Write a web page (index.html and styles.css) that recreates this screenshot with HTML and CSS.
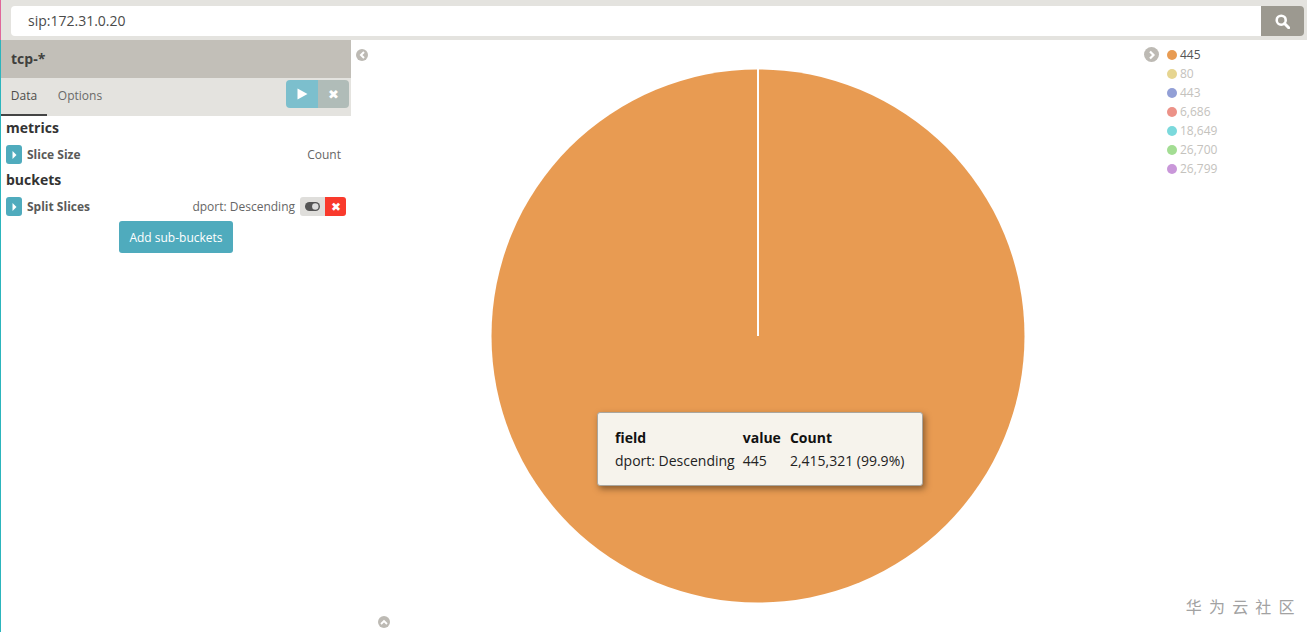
FILE: index.html
```html
<!DOCTYPE html>
<html lang="en">
<head>
<meta charset="utf-8">
<title>tcp-*</title>
<link rel="stylesheet" href="styles.css">
</head>
<body>
<div class="app">
  <header class="query-bar">
    <div class="query-input">sip:172.31.0.20</div>
    <button class="query-btn" aria-label="Search">
      <svg width="15" height="15" viewBox="0 0 14 14"><circle cx="5.800" cy="5.800" r="4.200" fill="none" stroke="#fff" stroke-width="2.400"/><path d="M8.900 8.900L12.800 12.800" stroke="#fff" stroke-width="2.800" stroke-linecap="round"/></svg>
    </button>
  </header>
  <main class="workspace">
    <aside class="sidebar">
      <div class="index-title">tcp-*</div>
      <div class="tabs">
        <span class="tab active">Data</span>
        <span class="tab">Options</span>
        <div class="run-group">
          <span class="run-btn">
            <svg width="11" height="12" viewBox="0 0 11 12"><path d="M0.500 0.500L10.500 6L0.500 11.500Z" fill="#fff"/></svg>
          </span>
          <span class="stop-btn">&#10006;</span>
        </div>
      </div>
      <div class="section-title first">metrics</div>
      <div class="agg-row">
        <span class="agg-toggle"><svg width="5" height="8" viewBox="0 0 5 8"><path d="M0.500 0L4.500 4L0.500 8Z" fill="#fff"/></svg></span>
        <span class="agg-name">Slice Size</span>
        <span class="agg-value pad-right">Count</span>
      </div>
      <div class="section-title">buckets</div>
      <div class="agg-row">
        <span class="agg-toggle"><svg width="5" height="8" viewBox="0 0 5 8"><path d="M0.500 0L4.500 4L0.500 8Z" fill="#fff"/></svg></span>
        <span class="agg-name">Split Slices</span>
        <span class="agg-value">dport: Descending</span>
        <span class="agg-actions">
          <span class="agg-switch"><svg width="15" height="9" viewBox="0 0 15 9"><rect x="0" y="0" width="15" height="9" rx="4.500" fill="#555"/><circle cx="10.300" cy="4.500" r="3.200" fill="#ddd"/></svg></span>
          <span class="agg-remove">&#10006;</span>
        </span>
      </div>
      <div class="add-row"><button class="add-btn">Add sub-buckets</button></div>
    </aside>
    <section class="viz">
      <span class="round-icon collapse-left"><svg width="7" height="8" viewBox="0 0 7 8"><path d="M5 1L2 4L5 7" fill="none" stroke="#fff" stroke-width="2"/></svg></span>
      <div class="chart">
        <svg class="pie" width="534" height="534" viewBox="0 0 534 534">
          <circle cx="267" cy="267" r="266.500" fill="#e89b52"/>
          <path d="M267 0V267" stroke="#fff" stroke-width="2"/>
        </svg>
        <div class="tooltip">
          <table>
            <tr><th>field</th><th>value</th><th>Count</th></tr>
            <tr><td>dport: Descending</td><td>445</td><td>2,415,321 (99.9%)</td></tr>
          </table>
        </div>
      </div>
      <div class="legend">
        <span class="round-icon legend-toggle"><svg width="8" height="10" viewBox="0 0 8 10"><path d="M2 1.500L5.500 5L2 8.500" fill="none" stroke="#fff" stroke-width="2.200"/></svg></span>
        <ul class="legend-list">
          <li class="on"><i class="dot c1"></i>445</li>
          <li><i class="dot c2"></i>80</li>
          <li><i class="dot c3"></i>443</li>
          <li><i class="dot c4"></i>6,686</li>
          <li><i class="dot c5"></i>18,649</li>
          <li><i class="dot c6"></i>26,700</li>
          <li><i class="dot c7"></i>26,799</li>
        </ul>
      </div>
      <span class="round-icon collapse-up"><svg width="8" height="6" viewBox="0 0 8 6"><path d="M1 5L4 2L7 5" fill="none" stroke="#fff" stroke-width="1.800"/></svg></span>
      <div class="watermark">华 为 云 社 区</div>
    </section>
  </main>
</div>
</body>
</html>
```

FILE: styles.css
```css
* { box-sizing: border-box; }
html, body { margin: 0; height: 100%; overflow: hidden; background: #fff; }
body { font-family: "Open Sans", "Noto Sans CJK SC", sans-serif; font-size: 12px; color: #444; }
.app { display: flex; flex-direction: column; height: 632px; }

.query-bar {
  height: 40px; flex: none; display: flex;
  padding: 6px 3px 4px 11px;
  background: #e4e3df;
  box-shadow: inset 1px 0 0 #e0679a;
}
.query-input {
  flex: 1; background: #fff; border-radius: 4px 0 0 4px;
  padding-left: 17px; font-size: 14px; line-height: 30px; color: #4a4a4a;
}
.query-btn {
  width: 43px; border: 0; padding: 0; background: #9c9990;
  border-radius: 0 4px 4px 0; display: flex; align-items: center; justify-content: center;
}

.workspace { flex: 1; display: flex; min-height: 0; }
.sidebar { width: 351px; flex: none; border-left: 1px solid #2cb5bd; }
.index-title {
  height: 38px; background: #c2bfb8; padding-left: 10px;
  font-size: 14px; font-weight: 700; line-height: 38px; color: #3f3f3d;
}
.tabs {
  height: 38px; display: flex; align-items: stretch; background: #e4e3df; padding-right: 2px;
}
.tab { width: 46px; text-align: center; line-height: 35px; color: #6a6a68; }
.tab.active { border-bottom: 2px solid #444; color: #4d4d4b; }
.tab:nth-child(2) { width: 66px; }
.run-group { margin: 2px 0 2px auto; display: flex; height: 28px; border-radius: 4px; overflow: hidden; }
.run-btn { width: 32px; background: #7cbfcd; display: flex; align-items: center; justify-content: center; }
.stop-btn { width: 31px; background: #b0bcb8; color: #fff; font-size: 13px; text-align: center; line-height: 28px; }

.section-title { font-size: 14px; font-weight: 700; color: #333; line-height: 20px; padding-left: 5px; }
.section-title.first { margin-top: 2px; }
.agg-row { display: flex; align-items: center; height: 19px; margin: 7px 5px 6px 5px; }
.agg-toggle {
  width: 16px; height: 19px; border-radius: 3px; background: #4fabbd;
  display: flex; align-items: center; justify-content: center; flex: none;
}
.agg-name { margin-left: 5px; font-weight: 700; color: #5a5a58; flex: 1; }
.agg-value { color: #666; }
.pad-right { padding-right: 5px; }
.agg-actions { display: flex; height: 19px; margin-left: 5px; border-radius: 3px; overflow: hidden; }
.agg-switch { width: 25px; background: #dfdedb; display: flex; align-items: center; justify-content: center; }
.agg-remove { width: 21px; background: #f93a2c; color: #fff; font-size: 12px; text-align: center; line-height: 19px; }
.add-row { display: flex; justify-content: center; margin-top: -1px; }
.add-btn {
  width: 114px; height: 32px; padding: 0; border: 0; border-radius: 3px;
  background: #4fabbd; color: #fff; font: 12px "Open Sans", sans-serif;
}

.viz { flex: 1; display: flex; position: relative; min-width: 0; }
.chart { width: 814px; flex: none; display: flex; align-items: center; justify-content: center; position: relative; }
.pie { display: block; }
.tooltip {
  position: absolute; left: 246px; top: 372px; width: 326px; height: 74px;
  padding: 13px 10px 0 14px;
  background: #f6f3ec; border: 1px solid #a9a69f; border-radius: 3px;
  box-shadow: 2px 3px 6px rgba(60, 40, 20, 0.55);
  color: #222; font-size: 14px;
}
.tooltip table { border-collapse: collapse; }
.tooltip th, .tooltip td { padding: 0 8px 0 3px; height: 23px; text-align: left; white-space: nowrap; font-weight: 400; }
.tooltip th { font-weight: 700; color: #111; }
.tooltip td:first-child, .tooltip th:first-child { padding-right: 5px; }
.tooltip td:nth-child(2), .tooltip th:nth-child(2) { padding-right: 6px; }

.round-icon {
  position: absolute; border-radius: 50%; background: #bdbab4;
  display: flex; align-items: center; justify-content: center;
}
.collapse-left { left: 5px; top: 9px; width: 12px; height: 12px; }
.collapse-up { left: 27px; top: 576px; width: 12px; height: 12px; }
.legend { flex: 1; position: relative; }
.legend-toggle { left: -21px; top: 7px; width: 15px; height: 15px; }
.legend-list { list-style: none; margin: 5px 0 0; padding: 0 0 0 2px; }
.legend-list li { height: 19px; display: flex; align-items: center; color: #c4c2bd; font-size: 12px; }
.legend-list li.on { color: #555; }
.dot { width: 10px; height: 10px; border-radius: 50%; margin-right: 3px; flex: none; }
.c1 { background: #e89b52; }
.c2 { background: #e6d591; }
.c3 { background: #929fd6; }
.c4 { background: #ec9288; }
.c5 { background: #7bd9dc; }
.c6 { background: #a3dd93; }
.c7 { background: #c997d9; }
.watermark {
  position: absolute; right: 11px; bottom: 16px;
  font-size: 16px; line-height: 18px; letter-spacing: 1.500px; color: #a2a2a2; white-space: nowrap;
}
```
